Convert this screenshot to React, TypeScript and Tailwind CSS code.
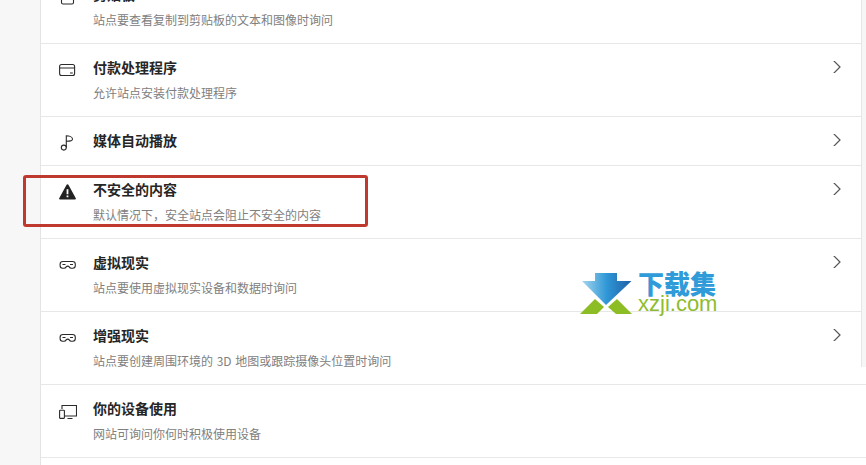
import React from "react";

const Icon = ({ children }: { children: React.ReactNode }) => (
  <svg width="18" height="16" viewBox="0 0 18 16" fill="none" stroke="#2b2b2b" strokeWidth="1.1" className="-mb-px mt-[5px] shrink-0">
    {children}
  </svg>
);

const Goggles = () => (
  <Icon>
    <path d="M4 4.500h9.500c1.700 0 2.800 1 2.800 2.700v1.300c0 1.700-1 2.700-2.500 2.700h-1.600c-1 0-1.500-.5-2-1.300-.3-.5-.6-.8-1.500-.8s-1.200.3-1.500.8c-.5.8-1 1.300-2 1.300H3.600c-1.500 0-2.500-1-2.500-2.700V7.200C1.100 5.500 2.300 4.500 4 4.500z" />
    <path d="M3.500 7.500h3M11 7.500h3" />
  </Icon>
);

const rows: { title: string; sub?: string; icon: React.ReactNode; chevron?: boolean }[] = [
  {
    title: "剪贴板",
    sub: "站点要查看复制到剪贴板的文本和图像时询问",
    chevron: true,
    icon: (
      <Icon>
        <rect x="2.500" y="1" width="12" height="14" rx="1.500" />
        <rect x="5.500" y="0" width="6" height="2.500" rx="1" />
      </Icon>
    ),
  },
  {
    title: "付款处理程序",
    sub: "允许站点安装付款处理程序",
    chevron: true,
    icon: (
      <Icon>
        <rect x="0.600" y="2.500" width="15" height="11" rx="2" />
        <path d="M0.600 6h15M11 11h2.800" />
      </Icon>
    ),
  },
  {
    title: "媒体自动播放",
    chevron: true,
    icon: (
      <Icon>
        <circle cx="4.800" cy="12.600" r="2.500" />
        <path d="M7.300 12.600V0.800c3 0 6.200 1.200 6.200 3.400 0 1.500-2.400 2-6.200 2" />
      </Icon>
    ),
  },
  {
    title: "不安全的内容",
    sub: "默认情况下，安全站点会阻止不安全的内容",
    chevron: true,
    icon: (
      <svg width="18" height="16" viewBox="0 0 18 16" className="-mb-px mt-[5px] shrink-0">
        <path fillRule="evenodd" fill="#222" d="M8.500 0.300c.4 0 .7.2.9.500l7.400 13.500c.3.600-.1 1.200-.8 1.200H1c-.7 0-1.100-.6-.8-1.200L7.600 .8c.2-.3.5-.5.9-.5zM7.600 5.300v5h1.800v-5zM7.600 11.500v1.700h1.800v-1.700z" />
      </svg>
    ),
  },
  { title: "虚拟现实", sub: "站点要使用虚拟现实设备和数据时询问", chevron: true, icon: <Goggles /> },
  { title: "增强现实", sub: "站点要创建周围环境的 3D 地图或跟踪摄像头位置时询问", chevron: true, icon: <Goggles /> },
  {
    title: "你的设备使用",
    sub: "网站可询问你何时积极使用设备",
    icon: (
      <Icon>
        <path d="M3 6V2.500h14.500v10.500H5.500M8.500 15.500h5" />
        <rect x="0.600" y="7.200" width="4.800" height="8.200" rx=".6" />
      </Icon>
    ),
  },
  { title: "", icon: null },
];

export default function App() {
  return (
    <div className="relative flex h-[465px] w-[866px] overflow-hidden bg-[#f7f7f7] font-['Noto_Sans_CJK_SC','Noto_Sans',sans-serif]">
      <div className="w-[40px] shrink-0" />
      <div className="-mt-[29px] flex-1 border-l border-[#e4e4e4] bg-white">
        {rows.map((r, i) => (
          <div
            key={i}
            className={
              r.sub
                ? "flex items-start border-b border-[#e7e7e7] pb-[14px] pl-[18px] pr-[23px] pt-[13px]"
                : "flex items-start border-b border-[#e7e7e7] pb-[15px] pl-[18px] pr-[23px] pt-[13px]"
            }
          >
            {r.icon}
            <div className="ml-[16px] flex-1">
              <div className="h-5 text-[14px] font-bold leading-5 text-[#262626]">{r.title}</div>
              {r.sub && (
                <div className="mt-[7px] h-[18px] text-[12px] leading-[18px] text-[#808080] [word-spacing:1px]">{r.sub}</div>
              )}
            </div>
            {r.chevron && (
              <svg width="12" height="12" viewBox="0 0 12 12" fill="none" stroke="#555" strokeWidth="1.200" className="mt-[4px] shrink-0">
                <path d="M2.500 -0.500L9 6l-6.500 6.500" />
              </svg>
            )}
          </div>
        ))}
      </div>

      {/* right page gutter, stops above the bottom of the picture */}
      <div className="absolute right-0 top-0 h-[367px] w-[5px] border-l border-[#e6e6e6] bg-[#f6f6f6]" />

      {/* red annotation box */}
      <div className="absolute left-[23px] top-[175px] h-[52px] w-[345px] rounded-[3px] border-[3px] border-[#c0392f]" />

      {/* watermark */}
      <div className="absolute left-[580px] top-[272px] flex items-start">
        <svg width="54" height="44" viewBox="0 0 54 44" className="shrink-0">
          <defs>
            <linearGradient id="arrow" x1="0" y1="0" x2="1" y2="0">
              <stop offset="0" stopColor="#a5d6ee" />
              <stop offset="0.5" stopColor="#2f97d6" />
              <stop offset="1" stopColor="#1f5fa6" />
            </linearGradient>
          </defs>
          <path d="M15 1h22v8h14.500L26 33 2 9h13z" fill="url(#arrow)" />
          <path d="M0 42l15-15 9 8-7 7z" fill="#8cbd25" />
          <path d="M28 35l9-8 15 15H36z" fill="#8cbd25" />
        </svg>
        <div className="ml-[4px] flex flex-col items-start">
          <div className="h-[22px] text-[26px] font-black leading-[22px] text-[#2f9bd8]">下载集</div>
          <div className="h-[19px] font-['Liberation_Sans',sans-serif] text-[22px] leading-[19px] text-[#8fbc2f]">xzji.com</div>
        </div>
      </div>
    </div>
  );
}
